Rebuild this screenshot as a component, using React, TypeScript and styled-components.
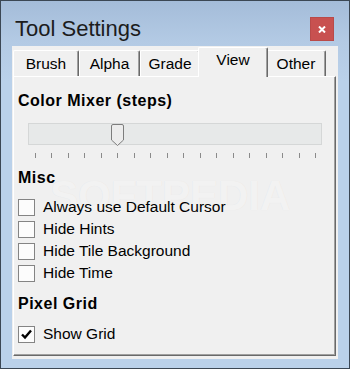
import React from 'react';
import styled, { createGlobalStyle } from 'styled-components';

const TABS = [
  { label: 'Brush', width: 66 },
  { label: 'Alpha', width: 61 },
  { label: 'Grade', width: 60 },
  { label: 'View', width: 66 },
  { label: 'Other', width: 60 },
];

const MISC = ['Always use Default Cursor', 'Hide Hints', 'Hide Tile Background', 'Hide Time'];

const TICKS = 18;
const STEP = 5;

const App: React.FC = () => {
  const activeTab = 'View';
  const thumbLeft = 6 + (STEP / (TICKS - 1)) * 280 + 0.5 - 6.5;

  return (
    <>
      <GlobalStyle />
      <Window>
        <TitleBar>
          <Title>Tool Settings</Title>
          <CloseButton>
            <svg width="8" height="7" viewBox="0 0 8 7">
              <path d="M1 0.5 L7 6.5 M7 0.5 L1 6.5" stroke="#fff" strokeWidth="2" />
            </svg>
          </CloseButton>
        </TitleBar>
        <Client>
          <TabStrip>
            {TABS.map((t) => (
              <Tab key={t.label} $width={t.width} $active={t.label === activeTab}>
                {t.label}
              </Tab>
            ))}
          </TabStrip>
          <Panel>
            <Watermark>SOFTPEDIA</Watermark>
            <Heading $top={14}>Color Mixer (steps)</Heading>
            <Track>
              <Thumb style={{ left: thumbLeft }}>
                <svg width="13" height="22" viewBox="0 0 13 22">
                  <path
                    d="M2 0.5 H11 Q12.5 0.5 12.5 2 V16 L6.5 21.5 L0.5 16 V2 Q0.5 0.5 2 0.5 Z"
                    fill="#ececec"
                    stroke="#7d7d7d"
                  />
                </svg>
              </Thumb>
            </Track>
            <Ticks>
              {Array.from({ length: TICKS }).map((_, i) => (
                <Tick key={i} />
              ))}
            </Ticks>
            <Heading $top={10}>Misc</Heading>
            <CheckList>
              {MISC.map((m) => (
                <CheckRow key={m}>
                  <Box />
                  <CheckLabel>{m}</CheckLabel>
                </CheckRow>
              ))}
            </CheckList>
            <Heading $top={10}>Pixel Grid</Heading>
            <CheckList style={{ marginTop: 9 }}>
              <CheckRow>
                <Box>
                  <svg width="15" height="15" viewBox="0 0 15 15">
                    <path d="M3 7.5 L6 10.5 L12 3.5" stroke="#000" strokeWidth="2.4" fill="none" />
                  </svg>
                </Box>
                <CheckLabel>Show Grid</CheckLabel>
              </CheckRow>
            </CheckList>
          </Panel>
        </Client>
      </Window>
    </>
  );
};

const GlobalStyle = createGlobalStyle`
  html, body {
    margin: 0;
    padding: 0;
    background: #fff;
  }
  body {
    font-family: "Liberation Sans", Arial, sans-serif;
  }
`;

const Window = styled.div`
  width: 350px;
  height: 369px;
  box-sizing: border-box;
  border: 1px solid #3b4754;
  background: linear-gradient(to bottom, #a4bcd9 0px, #b3cae4 40px, #bad1ea 80px, #bad1ea 100%);
  display: flex;
  flex-direction: column;
`;

const TitleBar = styled.div`
  height: 45px;
  box-sizing: border-box;
  padding: 15px 15px 0 14px;
  display: flex;
  justify-content: space-between;
  align-items: flex-start;
`;

const Title = styled.div`
  font-size: 22px;
  line-height: 26px;
  color: #1c1c1c;
`;

const CloseButton = styled.div`
  width: 24px;
  height: 24px;
  margin-top: 1px;
  box-sizing: border-box;
  background: #c85150;
  border: 1px solid #b94a49;
  display: flex;
  align-items: center;
  justify-content: center;
`;

const Client = styled.div`
  flex: 1;
  margin: 0 11px 9px 11px;
  padding: 1px 2px 3px 1px;
  background: #f0f0f0;
  display: flex;
  flex-direction: column;
`;

const TabStrip = styled.div`
  height: 30px;
  margin-bottom: -1px;
  display: flex;
  align-items: flex-end;
`;

const Tab = styled.div<{ $width: number; $active?: boolean }>`
  width: ${(p) => p.$width}px;
  height: ${(p) => (p.$active ? 30 : 26)}px;
  margin: ${(p) => (p.$active ? '0 -2px 0 -2px' : '0 0 1px 0')};
  ${(p) => (p.$active ? 'width: ' + (p.$width + 4) + 'px;' : '')}
  box-sizing: border-box;
  position: relative;
  z-index: ${(p) => (p.$active ? 1 : 0)};
  background: #f0f0f0;
  border-top: 1px solid #fff;
  border-left: 1px solid #fff;
  border-right: 1px solid #696969;
  border-radius: 2px 2px 0 0;
  box-shadow: inset -1px 0 0 #a0a0a0;
  padding-top: ${(p) => (p.$active ? 3 : 4)}px;
  text-align: center;
  font-size: 15.5px;
  line-height: 18px;
  color: #000;
`;

const Panel = styled.div`
  flex: 1;
  position: relative;
  box-sizing: border-box;
  border: 1px solid;
  border-color: #fff #696969 #696969 #fff;
  box-shadow: inset -1px -1px 0 #a0a0a0;
  padding: 0 0 0 4px;
  display: flex;
  flex-direction: column;
  overflow: hidden;
`;

const Watermark = styled.div`
  position: absolute;
  left: 36px;
  top: 98px;
  font-size: 42px;
  line-height: 42px;
  font-weight: bold;
  color: rgba(255, 255, 255, 0.6);
  text-shadow: 0 0 1px rgba(0, 0, 0, 0.07);
  pointer-events: none;
`;

const Heading = styled.div<{ $top: number }>`
  margin-top: ${(p) => p.$top}px;
  font-size: 16px;
  line-height: 20px;
  font-weight: bold;
  letter-spacing: 0.5px;
  color: #000;
  position: relative;
`;

const Track = styled.div`
  position: relative;
  margin: 12px 0 0 10px;
  width: 294px;
  height: 22px;
  box-sizing: border-box;
  background: #e7e9e9;
  border: 1px solid #d5d7d7;
`;

const Thumb = styled.div`
  position: absolute;
  top: 0;
  width: 13px;
  height: 22px;
  svg {
    display: block;
  }
`;

const Ticks = styled.div`
  margin: 8px 0 0 17px;
  width: 281px;
  height: 5px;
  display: flex;
  justify-content: space-between;
`;

const Tick = styled.div`
  width: 1px;
  height: 5px;
  background: #8a8a8a;
`;

const CheckList = styled.div`
  margin-top: 8px;
  display: flex;
  flex-direction: column;
  position: relative;
`;

const CheckRow = styled.div`
  height: 22px;
  display: flex;
  align-items: center;
  gap: 8px;
`;

const Box = styled.div`
  width: 17px;
  height: 17px;
  box-sizing: border-box;
  border: 1px solid #848484;
  background: #fcfcfc;
  display: flex;
  align-items: center;
  justify-content: center;
`;

const CheckLabel = styled.span`
  font-size: 15.5px;
  line-height: 18px;
  color: #000;
`;

export default App;
